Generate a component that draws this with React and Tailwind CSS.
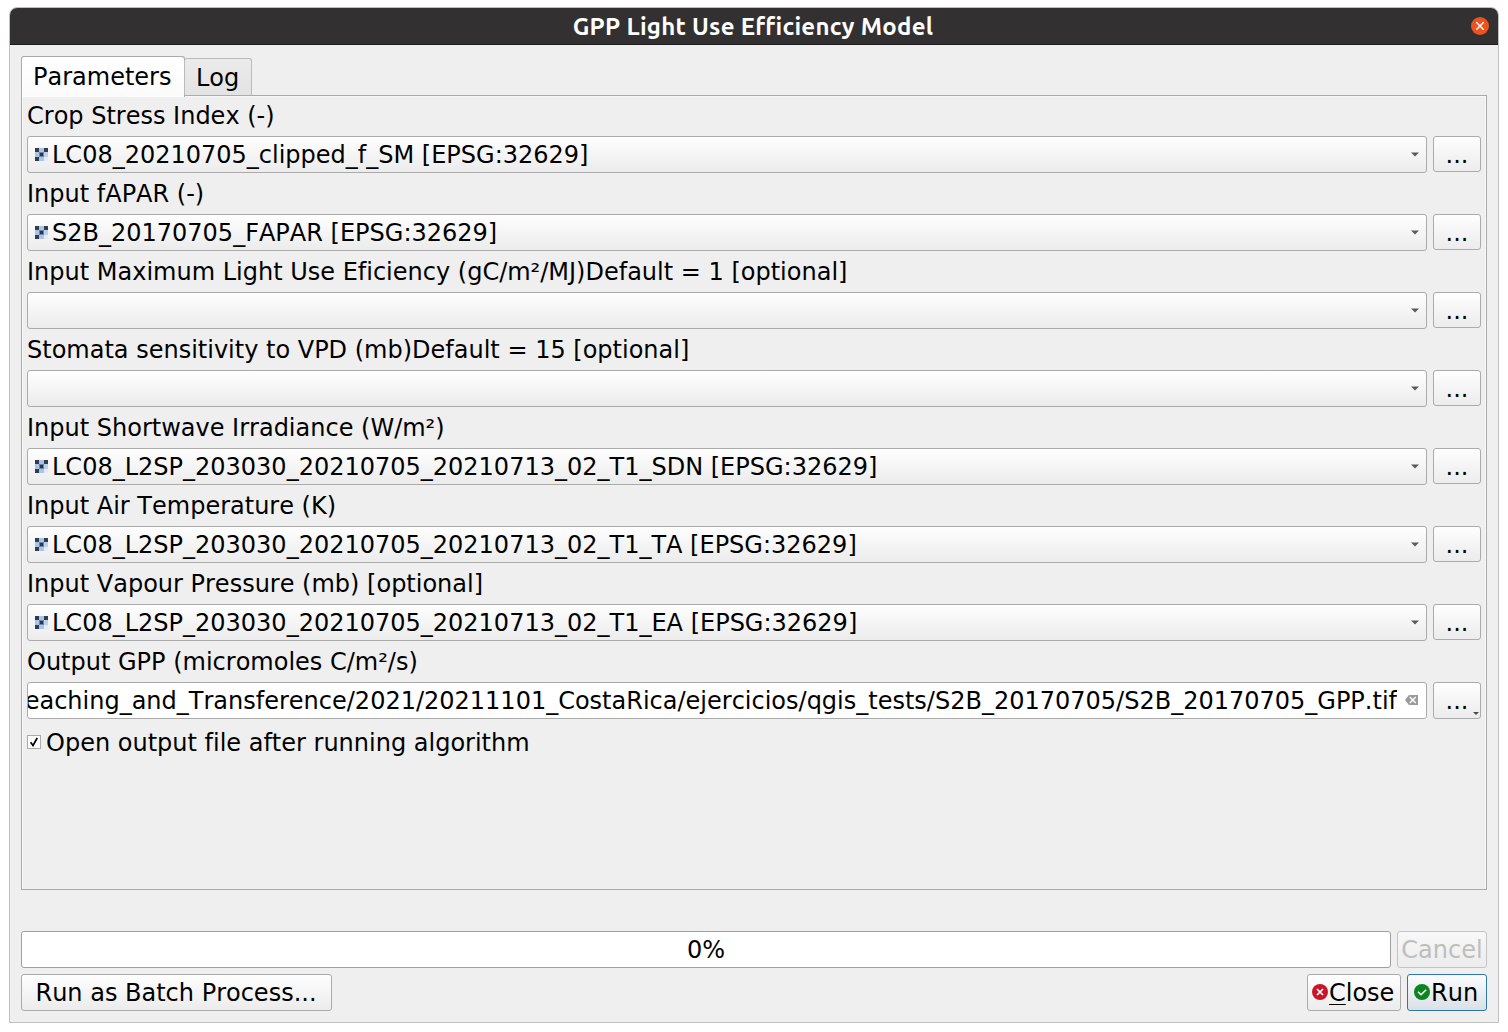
const fields = [
  { label: 'Crop Stress Index (-)', value: 'LC08_20210705_clipped_f_SM [EPSG:32629]' },
  { label: 'Input fAPAR (-)', value: 'S2B_20170705_FAPAR [EPSG:32629]' },
  { label: 'Input Maximum Light Use Eficiency (gC/m²/MJ)Default = 1 [optional]', value: '' },
  { label: 'Stomata sensitivity to VPD (mb)Default = 15 [optional]', value: '' },
  { label: 'Input Shortwave Irradiance (W/m²)', value: 'LC08_L2SP_203030_20210705_20210713_02_T1_SDN [EPSG:32629]' },
  { label: 'Input Air Temperature (K)', value: 'LC08_L2SP_203030_20210705_20210713_02_T1_TA [EPSG:32629]' },
  { label: 'Input Vapour Pressure (mb) [optional]', value: 'LC08_L2SP_203030_20210705_20210713_02_T1_EA [EPSG:32629]' },
];

const button = 'rounded-[3px] border border-[#ababab] bg-linear-to-b from-[#fefefe] to-[#ececec]';

function RasterIcon() {
  return (
    <svg className="mr-1 shrink-0" width="13" height="13" viewBox="0 0 13 13" shapeRendering="crispEdges">
      <rect width="13" height="13" fill="#a9c4e6" />
      <path d="M0 0h4v4H0zM9 0h4v4H9zM0 9h4v4H0z" fill="#2e3d4f" />
      <rect x="4" y="4" width="5" height="5" fill="#71859f" />
      <rect x="5" y="5" width="3" height="3" fill="#2a3848" />
      <rect x="9" y="4" width="4" height="5" fill="#bdd1ea" />
      <rect x="9" y="9" width="4" height="4" fill="#e3ebf5" />
    </svg>
  );
}

function Arrow() {
  return (
    <svg className="shrink-0" width="8" height="5" viewBox="0 0 8 5">
      <path d="M0 .5h8L4 4.5z" fill="#5a5a5a" />
    </svg>
  );
}

function Field({ label, value }) {
  return (
    <div className="h-[78px]">
      <div className="h-[39px] pt-[5px]">{label}</div>
      <div className="flex items-start gap-[6px]">
        <div className={`${button} flex h-[37px] w-[1400px] items-center px-[7px]`}>
          {value && <RasterIcon />}
          <span className="grow">{value}</span>
          <Arrow />
        </div>
        <div className={`${button} flex h-9 w-12 items-center justify-center pt-px`}>...</div>
      </div>
    </div>
  );
}

export default function App() {
  return (
    <div className="h-[1032px] w-[1508px] overflow-hidden bg-white pl-[9px] pt-[7px] font-['DejaVu_Sans',sans-serif] text-[24px] leading-[28px] whitespace-pre text-black [font-kerning:none] [font-variant-ligatures:none]">
      <div className="flex h-[1016px] w-[1490px] flex-col rounded-t-[8px] border border-[#bfbfbf] bg-[#efefef]">
        <div className="flex h-[37px] shrink-0 items-center rounded-t-[7px] border-b border-[#1c1c1c] bg-[#333031]">
          <div className="grow pl-[25px] pt-[2px] text-center font-['Ubuntu','Noto_Sans',sans-serif] text-[24px] font-bold tracking-[0.25px] text-white">
            <span>GPP Light Use Efficiency Model</span>
          </div>
          <svg className="mr-[9px] shrink-0" width="18" height="18" viewBox="0 0 18 18">
            <circle cx="9" cy="9" r="9" fill="#e95420" />
            <path d="M5.3 5.3l7.4 7.4M12.7 5.3l-7.4 7.4" stroke="#fff" strokeWidth="1.4" />
          </svg>
        </div>

        <div className="flex flex-col px-[11px] pt-[11px]">
          <div className="z-10 -mb-px flex h-10 items-start">
            <div className="flex h-[41px] w-[164px] items-center rounded-t-[3px] border border-b-0 border-[#ababab] bg-linear-to-b from-white to-[#fbfbfb] pl-[11px]">
              Parameters
            </div>
            <div className="-ml-px mt-[2px] flex h-[37px] w-[68px] items-center rounded-t-[3px] border border-b-0 border-[#bababa] bg-linear-to-b from-[#ebebeb] to-[#e3e3e3] pl-[11px] pt-px">
              Log
            </div>
          </div>
          <div className="flex h-[795px] flex-col border border-[#ababab] px-[5px] pt-px shadow-[inset_1px_1px_0_#f8f8f8,inset_-1px_0_0_#f8f8f8]">
            {fields.map((f) => (
              <Field key={f.label} label={f.label} value={f.value} />
            ))}
            <div className="h-[39px] pt-[5px]">Output GPP (micromoles C/m²/s)</div>
            <div className="flex items-start gap-[6px]">
              <div className="flex h-[37px] w-[1400px] items-center justify-end rounded-[3px] border border-[#ababab] bg-white pr-[8px]">
                <div className="flex w-[1369px] justify-end overflow-hidden">
                  <span>eaching_and_Transference/2021/20211101_CostaRica/ejercicios/qgis_tests/S2B_20170705/S2B_20170705_GPP.tif</span>
                </div>
                <svg className="ml-[8px] mb-px shrink-0" width="13" height="10" viewBox="0 0 13 10">
                  <path d="M4 0h9v10H4L0 5z" fill="#9a9a9a" />
                  <path d="M4.8 2l6 6M10.8 2l-6 6" stroke="#fff" strokeWidth="1.4" />
                </svg>
              </div>
              <div className={`${button} relative flex h-[37px] w-12 items-center justify-center pt-px`}>
                ...
                <svg className="absolute bottom-[3px] right-[1px]" width="6" height="3" viewBox="0 0 6 3">
                  <path d="M0 0h6L3 3z" fill="#4a4a4a" />
                </svg>
              </div>
            </div>
            <div className="mt-[10px] flex items-center">
              <div className="mb-[2px] flex h-[14px] w-[14px] items-center justify-center border border-[#ababab] bg-white">
                <svg width="10" height="10" viewBox="0 0 10 10">
                  <path d="M1.6 5.2l2.4 3.3L8.2 1" fill="none" stroke="#000" strokeWidth="1.7" />
                </svg>
              </div>
              <span className="ml-[5px]">Open output file after running algorithm</span>
            </div>
          </div>

          <div className="mt-[41px] flex gap-[6px]">
            <div className="flex h-[37px] w-[1370px] items-center justify-center rounded-[3px] border border-[#9f9f9f] bg-white">0%</div>
            <div className="flex h-[37px] w-[90px] items-center justify-center rounded-[3px] border border-[#c4c4c4] bg-linear-to-b from-[#f8f8f8] to-[#ececec] text-[#bebebe]">
              Cancel
            </div>
          </div>
          <div className="mt-[6px] flex">
            <div className={`${button} flex h-[37px] w-[311px] items-center justify-center pr-px`}>Run as Batch Process...</div>
            <div className={`${button} ml-auto flex h-[37px] w-[94px] items-center pl-1`}>
              <svg className="mr-px mb-px shrink-0" width="16" height="16" viewBox="0 0 16 16">
                <circle cx="8" cy="8" r="8" fill="#c7162b" />
                <path d="M5 5l6 6M11 5l-6 6" stroke="#fff" strokeWidth="1.7" />
              </svg>
              <span>
                <span className="underline decoration-1 underline-offset-[3px]">C</span>lose
              </span>
            </div>
            <div className="ml-[6px] flex h-[37px] w-[80px] items-center rounded-[3px] border border-[#2d77a5] bg-linear-to-b from-[#fbfcfd] to-[#d9e1e7] pl-[6px]">
              <svg className="mr-px mb-px shrink-0" width="16" height="16" viewBox="0 0 16 16">
                <circle cx="8" cy="8" r="8" fill="#0e8420" />
                <path d="M4 7.8l3 2.9 5.2-5" fill="none" stroke="#fff" strokeWidth="1.5" />
              </svg>
              <span>Run</span>
            </div>
          </div>
        </div>
      </div>
    </div>
  );
}
